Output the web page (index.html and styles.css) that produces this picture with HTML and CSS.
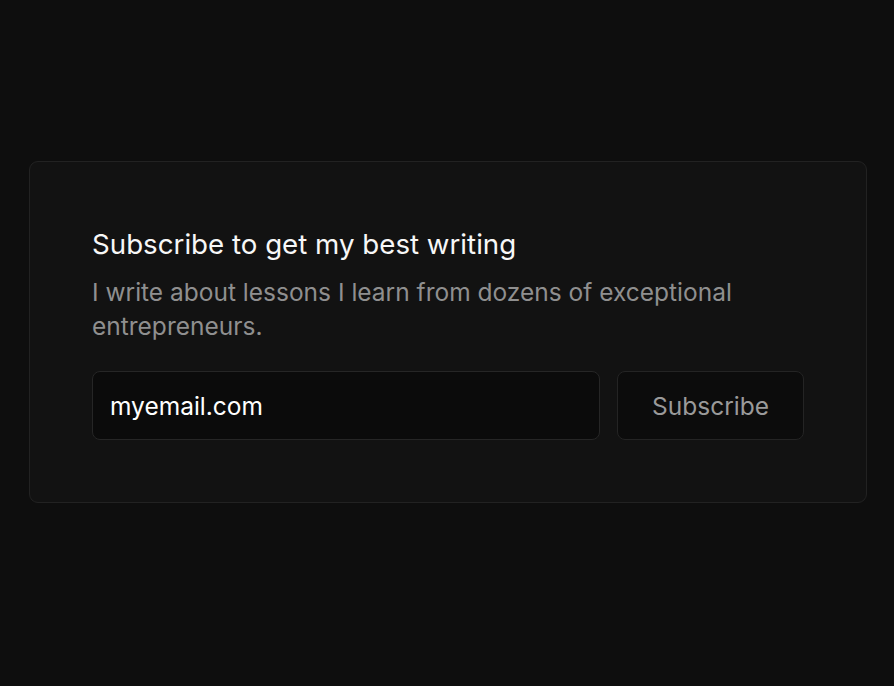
FILE: index.html
```html
<!DOCTYPE html>
<html lang="en">
<head>
<meta charset="utf-8">
<link rel="stylesheet" href="styles.css">
</head>
<body>
<main class="page">
  <section class="card">
    <h2 class="title">Subscribe to get my best writing</h2>
    <p class="desc">I write about lessons I learn from dozens of exceptional entrepreneurs.</p>
    <form class="form">
      <input class="email" type="email" value="myemail.com">
      <button class="btn" type="button">Subscribe</button>
    </form>
  </section>
</main>
</body>
</html>
```
FILE: styles.css
```css
html, body {
  margin: 0;
  padding: 0;
  background: #0e0e0e;
}
body {
  font-family: "Inter", "Noto Sans", sans-serif;
  width: 894px;
  height: 686px;
  overflow: hidden;
}
.page {
  padding: 161px 28px 0 29px;
}
.card {
  box-sizing: border-box;
  width: 838px;
  height: 342px;
  background: #121212;
  border: 1px solid #222222;
  border-radius: 9px;
  padding: 64px 62px 0 62px;
}
.title {
  margin: 0;
  font-size: 27.7px;
  font-weight: 400;
  line-height: 36px;
  color: #f7f7f7;
}
.desc {
  margin: 13px 0 0;
  font-size: 24.5px;
  line-height: 34px;
  color: #8f8f8f;
  max-width: 700px;
}
.form {
  display: flex;
  gap: 17px;
  margin-top: 28px;
}
.email {
  box-sizing: border-box;
  flex: 0 0 508px;
  height: 69px;
  background: #0b0b0b;
  border: 1px solid #262626;
  border-radius: 8px;
  padding: 0 17px;
  font-family: inherit;
  font-size: 24.5px;
  color: #ffffff;
  outline: none;
}
.btn {
  box-sizing: border-box;
  width: 188px;
  height: 69px;
  background: #0c0c0c;
  border: 1px solid #242424;
  border-radius: 8px;
  font-family: inherit;
  font-size: 24.5px;
  color: #9a9a9a;
}
```
